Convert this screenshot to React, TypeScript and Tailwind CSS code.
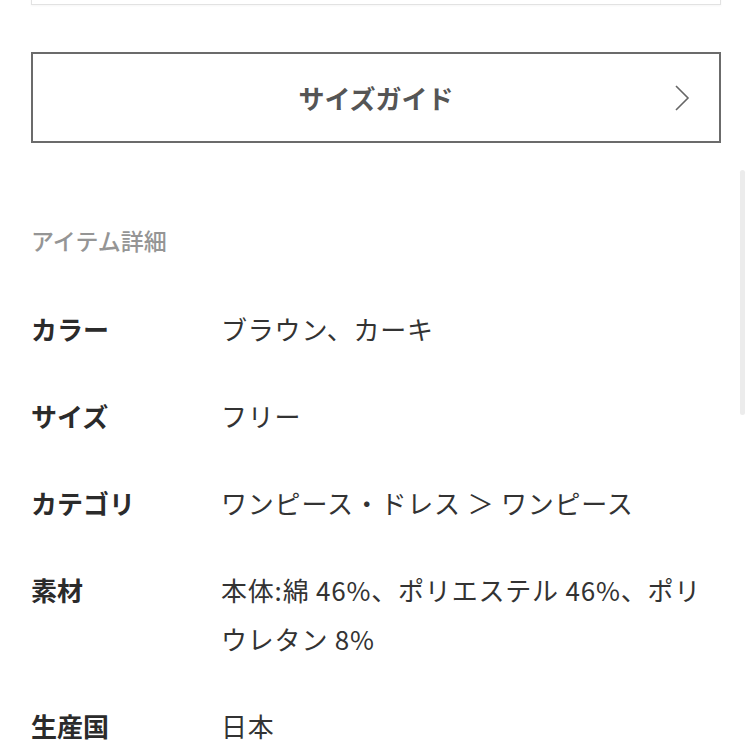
import React from 'react';

const rows: { label: string; value: string[] }[] = [
  { label: 'カラー', value: ['ブラウン、カーキ'] },
  { label: 'サイズ', value: ['フリー'] },
  { label: 'カテゴリ', value: ['ワンピース・ドレス ＞ ワンピース'] },
  { label: '素材', value: ['本体:綿 46%、ポリエステル 46%、ポリ', 'ウレタン 8%'] },
  { label: '生産国', value: ['日本'] },
];

const App: React.FC = () => {
  return (
    <div className="relative w-[752px] h-[752px] overflow-hidden bg-white font-['Noto_Sans_CJK_JP','Noto_Sans',sans-serif] text-[#333]">
      {/* scrollbar thumb */}
      <div className="absolute right-[7px] top-[170px] w-[5px] h-[245px] rounded-full bg-[#ececec]" />

      <div className="px-[31px]">
        {/* bottom of the previous box */}
        <div className="-mt-[40px] h-[45px] w-[690px] border border-[#e2e2e2] shadow-[0_1px_2px_rgba(0,0,0,0.04)]" />

        {/* size guide button */}
        <button
          type="button"
          className="mt-[47px] relative flex items-center justify-center w-[690px] h-[91px] border-2 border-[#6b6b6b] bg-white"
        >
          <span className="text-[26px] font-bold text-[#555]">サイズガイド</span>
          <svg
            className="absolute right-[29px] top-1/2 -translate-y-1/2"
            width="16"
            height="28"
            viewBox="0 0 16 28"
            fill="none"
          >
            <path d="M2 2 L14 14 L2 26" stroke="#666" strokeWidth="1.6" />
          </svg>
        </button>

        {/* item details */}
        <h3 className="mt-[82px] text-[23px] leading-[30px] font-medium text-[#959595]">アイテム詳細</h3>

        <dl className="mt-[49px] flex flex-col gap-[38px]">
          {rows.map((r) => (
            <div key={r.label} className="flex text-[26px] leading-[49px]">
              <dt className="w-[190px] shrink-0 font-bold text-[#2b2b2b]">{r.label}</dt>
              <dd className="flex-1 whitespace-nowrap tracking-[0.8px] text-[#333]">
                {r.value.map((line) => (
                  <div key={line}>{line}</div>
                ))}
              </dd>
            </div>
          ))}
        </dl>
      </div>
    </div>
  );
};

export default App;
